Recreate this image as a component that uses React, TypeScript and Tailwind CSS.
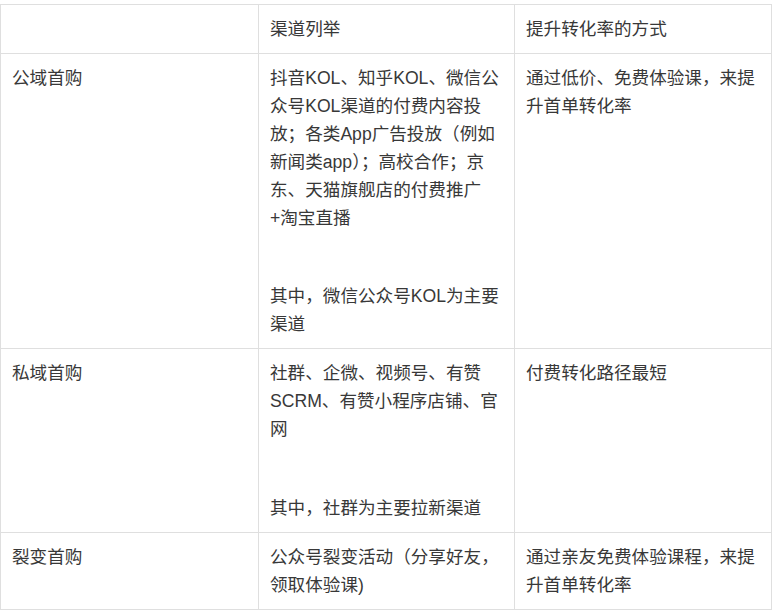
const rows: { title: string; gap: string; channels: string[][]; method: string[] }[] = [
  {
    title: '公域首购',
    gap: 'gap-[50px]',
    channels: [
      [
        '抖音KOL、知乎KOL、微信公',
        '众号KOL渠道的付费内容投',
        '放；各类App广告投放（例如',
        '新闻类app）；高校合作；京',
        '东、天猫旗舰店的付费推广',
        '+淘宝直播',
      ],
      ['其中，微信公众号KOL为主要', '渠道'],
    ],
    method: ['通过低价、免费体验课，来提', '升首单转化率'],
  },
  {
    title: '私域首购',
    gap: 'gap-[51px]',
    channels: [
      ['社群、企微、视频号、有赞', 'SCRM、有赞小程序店铺、官', '网'],
      ['其中，社群为主要拉新渠道'],
    ],
    method: ['付费转化路径最短'],
  },
  {
    title: '裂变首购',
    gap: 'gap-[50px]',
    channels: [['公众号裂变活动（分享好友，', '领取体验课)']],
    method: ['通过亲友免费体验课程，来提', '升首单转化率'],
  },
];

function Lines({ lines }: { lines: string[] }) {
  return (
    <div>
      {lines.map((line, i) => (
        <div key={i} className="whitespace-nowrap">
          {line}
        </div>
      ))}
    </div>
  );
}

export default function App() {
  const cell = 'border border-[#dfdfdf] align-top pl-[11px] pr-[8px] py-[10px]';

  return (
    <div
      className="bg-white w-[772px] h-[610px] pt-[4px] text-[#383838] text-[17.6px] leading-[28px]"
      style={{ fontFamily: '"Liberation Sans", "Noto Sans CJK SC", sans-serif' }}
    >
      <table className="border-collapse table-fixed w-[771px]">
        <colgroup>
          <col className="w-[258px]" />
          <col className="w-[256px]" />
          <col className="w-[257px]" />
        </colgroup>
        <tbody>
          <tr>
            <td className={cell}></td>
            <td className={cell}>渠道列举</td>
            <td className={cell}>提升转化率的方式</td>
          </tr>
          {rows.map((row) => (
            <tr key={row.title}>
              <td className={cell}>{row.title}</td>
              <td className={cell}>
                <div className={`flex flex-col ${row.gap}`}>
                  {row.channels.map((para, i) => (
                    <Lines key={i} lines={para} />
                  ))}
                </div>
              </td>
              <td className={cell}>
                <Lines lines={row.method} />
              </td>
            </tr>
          ))}
        </tbody>
      </table>
    </div>
  );
}
